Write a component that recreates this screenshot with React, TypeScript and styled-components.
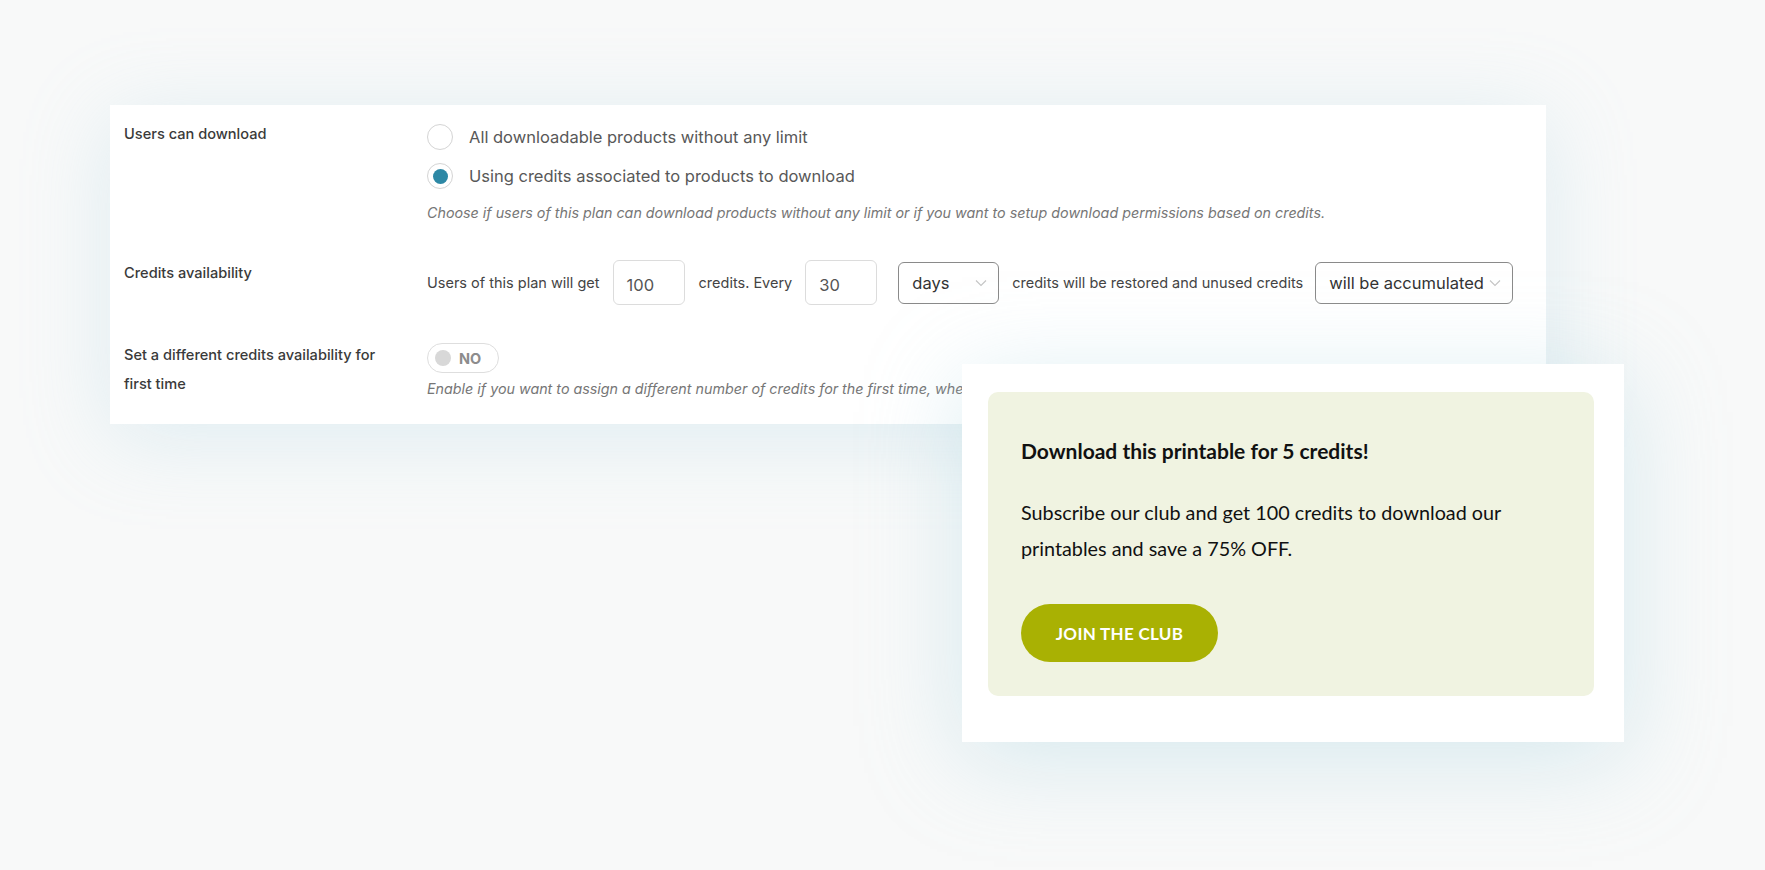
import React from "react";
import styled, { createGlobalStyle } from "styled-components";

const GlobalStyle = createGlobalStyle`
  html, body { margin: 0; padding: 0; }
  body {
    background: #f8f9f9;
    font-family: Inter, "Noto Sans", "Liberation Sans", sans-serif;
    -webkit-font-smoothing: antialiased;
  }
  * { box-sizing: border-box; }
`;

const Page = styled.div`
  position: relative;
  width: 1765px;
  height: 870px;
  padding: 105px 0 0 110px;
  overflow: hidden;
  background: #f8f9f9;
`;

const SettingsPanel = styled.section`
  width: 1436px;
  background: #ffffff;
  padding: 19px 0 25px 14px;
  display: flex;
  flex-direction: column;
  gap: 38px;
  box-shadow: 0 14px 80px rgba(165, 210, 224, 0.3);
`;

const SettingRow = styled.div`
  display: grid;
  grid-template-columns: 303px 1fr;
  align-items: start;
`;

const Label = styled.div<{ $offset: number }>`
  width: 270px;
  margin-top: ${(p) => p.$offset}px;
  font-size: 14.6px;
  font-weight: 500;
  line-height: 29px;
  color: #3a3a3a;
`;

const Field = styled.div`
  display: flex;
  flex-direction: column;
`;

const RadioList = styled.div`
  display: flex;
  flex-direction: column;
  gap: 13px;
`;

const RadioOption = styled.label`
  display: flex;
  align-items: center;
  gap: 16px;
  font-size: 16.5px;
  line-height: 26px;
  color: #585858;
`;

const RadioCircle = styled.span<{ $checked?: boolean }>`
  width: 26px;
  height: 26px;
  border-radius: 50%;
  border: 1px solid #d4d4d4;
  background: #fff;
  display: flex;
  align-items: center;
  justify-content: center;
  flex-shrink: 0;
  &::after {
    content: "";
    width: 15px;
    height: 15px;
    border-radius: 50%;
    background: ${(p) => (p.$checked ? "#2d88a5" : "transparent")};
  }
`;

const Hint = styled.p<{ $top: number }>`
  margin: ${(p) => p.$top}px 0 0;
  font-size: 14.3px;
  line-height: 18px;
  font-style: italic;
  color: #767676;
  white-space: nowrap;
`;

const InlineFields = styled.div`
  display: flex;
  align-items: center;
  height: 45px;
`;

const InlineText = styled.span<{ $gapRight: number }>`
  font-size: 14.5px;
  color: #444;
  margin-right: ${(p) => p.$gapRight}px;
`;

const NumberBox = styled.div<{ $gapRight: number }>`
  width: 72px;
  height: 45px;
  border: 1px solid #dcdcdc;
  border-radius: 6px;
  padding: 4px 13px 0;
  display: flex;
  align-items: center;
  font-size: 16.5px;
  color: #555;
  margin-right: ${(p) => p.$gapRight}px;
`;

const SelectBox = styled.div<{ $width: number; $gapRight: number }>`
  width: ${(p) => p.$width}px;
  height: 42px;
  border: 1px solid #8a8a8a;
  border-radius: 6px;
  padding: 0 11px 0 13px;
  display: flex;
  align-items: center;
  justify-content: space-between;
  font-size: 16.5px;
  color: #333;
  margin-right: ${(p) => p.$gapRight}px;
  svg { flex-shrink: 0; }
`;

const Toggle = styled.div`
  width: 72px;
  height: 30px;
  border: 1.5px solid #dedede;
  border-radius: 15px;
  display: flex;
  align-items: center;
  padding-left: 7px;
  gap: 8px;
  font-size: 14.5px;
  font-weight: 700;
  color: #8c8c8c;
`;

const ToggleKnob = styled.span`
  width: 16px;
  height: 16px;
  border-radius: 50%;
  background: #d8d8d8;
`;

const PromoCard = styled.aside`
  position: absolute;
  left: 962px;
  top: 364px;
  width: 662px;
  height: 378px;
  background: #fff;
  padding: 28px 30px 0 26px;
  box-shadow: 0 16px 90px rgba(160, 208, 222, 0.38);
`;

const PromoBox = styled.div`
  background: #f0f3e1;
  border-radius: 10px;
  padding: 45px 33px 34px;
  font-family: Lato, "Open Sans", sans-serif;
  color: #111;
`;

const PromoTitle = styled.h3`
  margin: 0;
  font-size: 21px;
  line-height: 28px;
  font-weight: 700;
`;

const PromoText = styled.p`
  margin: 29px 0 38px;
  width: 530px;
  font-size: 19.8px;
  line-height: 36px;
  font-weight: 400;
`;

const JoinButton = styled.button`
  width: 197px;
  height: 58px;
  border: none;
  border-radius: 29px;
  background: #a9b103;
  color: #fff;
  font-family: Lato, "Open Sans", sans-serif;
  font-size: 17px;
  font-weight: 700;
  letter-spacing: 0.3px;
  cursor: pointer;
`;

const Chevron = () => (
  <svg width="12" height="8" viewBox="0 0 12 8" fill="none">
    <path d="M1 1.5 L6 6.5 L11 1.5" stroke="#c4c4c4" strokeWidth="1.1" />
  </svg>
);

export default function App() {
  return (
    <Page>
      <GlobalStyle />
      <SettingsPanel>
        <SettingRow>
          <Label $offset={-4}>Users can download</Label>
          <Field>
            <RadioList>
              <RadioOption>
                <RadioCircle />
                All downloadable products without any limit
              </RadioOption>
              <RadioOption>
                <RadioCircle $checked />
                Using credits associated to products to download
              </RadioOption>
            </RadioList>
            <Hint $top={15}>
              Choose if users of this plan can download products without any limit or if you want to setup download permissions based on credits.
            </Hint>
          </Field>
        </SettingRow>

        <SettingRow>
          <Label $offset={-1}>Credits availability</Label>
          <InlineFields>
            <InlineText $gapRight={13}>Users of this plan will get</InlineText>
            <NumberBox $gapRight={14}>100</NumberBox>
            <InlineText $gapRight={13}>credits. Every</InlineText>
            <NumberBox $gapRight={21}>30</NumberBox>
            <SelectBox $width={101} $gapRight={13}>
              days
              <Chevron />
            </SelectBox>
            <InlineText $gapRight={12}>credits will be restored and unused credits</InlineText>
            <SelectBox $width={198} $gapRight={0}>
              will be accumulated
              <Chevron />
            </SelectBox>
          </InlineFields>
        </SettingRow>

        <SettingRow>
          <Label $offset={-2}>Set a different credits availability for first time</Label>
          <Field>
            <Toggle>
              <ToggleKnob />
              NO
            </Toggle>
            <Hint $top={7}>
              Enable if you want to assign a different number of credits for the first time, when a user subscribes to this plan.
            </Hint>
          </Field>
        </SettingRow>
      </SettingsPanel>

      <PromoCard>
        <PromoBox>
          <PromoTitle>Download this printable for 5 credits!</PromoTitle>
          <PromoText>
            Subscribe our club and get 100 credits to download our printables and save a 75% OFF.
          </PromoText>
          <JoinButton>JOIN THE CLUB</JoinButton>
        </PromoBox>
      </PromoCard>
    </Page>
  );
}
